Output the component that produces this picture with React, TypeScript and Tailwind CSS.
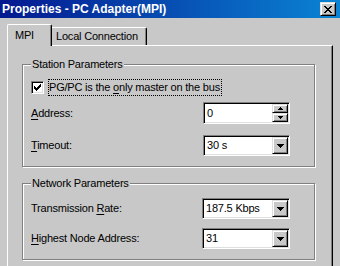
import React from "react";

const raised =
  "bg-[#c8c8c8] border border-t-[#dfdfdf] border-l-[#dfdfdf] border-r-black border-b-black shadow-[inset_1px_1px_0_#fff,inset_-1px_-1px_0_#808080]";
const sunken =
  "bg-white border border-t-[#808080] border-l-[#808080] border-r-white border-b-white shadow-[inset_1px_1px_0_#000,inset_-1px_-1px_0_#dfdfdf]";

function Rects({ w, h, rows }: { w: number; h: number; rows: [number, number, number][] }) {
  return (
    <svg width={w} height={h} viewBox={`0 0 ${w} ${h}`} shapeRendering="crispEdges">
      {rows.map(([x, y, ww], i) => (
        <rect key={i} x={x} y={y} width={ww} height={1} fill="#000" />
      ))}
    </svg>
  );
}

const DownTri = () => (
  <Rects w={7} h={4} rows={[[0, 0, 7], [1, 1, 5], [2, 2, 3], [3, 3, 1]]} />
);

function Combo({ value, w }: { value: string; w: string }) {
  return (
    <div className={`${sunken} ${w} h-[21px] flex items-stretch p-[1px]`}>
      <div className="flex-1 flex items-center pl-[2px]">{value}</div>
      <div className={`${raised} w-[16px] flex items-center justify-center`}>
        <DownTri />
      </div>
    </div>
  );
}

function Spin({ value, w }: { value: string; w: string }) {
  return (
    <div className={`${sunken} ${w} h-[22px] flex items-stretch p-[1px]`}>
      <div className="flex-1 flex items-center pl-[2px]">{value}</div>
      <div className="w-[16px] flex flex-col">
        <div className={`${raised} flex-1 flex items-center justify-center`}>
          <Rects w={5} h={3} rows={[[2, 0, 1], [1, 1, 3], [0, 2, 5]]} />
        </div>
        <div className={`${raised} flex-1 flex items-center justify-center`}>
          <Rects w={5} h={3} rows={[[0, 0, 5], [1, 1, 3], [2, 2, 1]]} />
        </div>
      </div>
    </div>
  );
}

function U({ children }: { children: React.ReactNode }) {
  return <span className="underline underline-offset-[2px] decoration-1">{children}</span>;
}

export default function App() {
  return (
    <div className="w-[340px] h-[266px] overflow-hidden bg-[#c8c8c8] flex flex-col font-['Liberation_Sans',Arial,sans-serif] text-[11px] leading-[13px] tracking-[-0.2px] text-black">
      {/* Title bar */}
      <div className="h-[18px] shrink-0 flex items-center justify-between pl-[2px] pr-[4px] bg-[linear-gradient(to_right,#041890,#0a84d4)]">
        <span className="text-white font-bold text-[12px] tracking-normal leading-[14px]">
          Properties - PC Adapter(MPI)
        </span>
        <div className={`${raised} w-[16px] h-[14px] flex items-center justify-center`}>
          <Rects
            w={8}
            h={7}
            rows={[
              [0, 0, 2], [6, 0, 2],
              [1, 1, 2], [5, 1, 2],
              [2, 2, 4],
              [3, 3, 2],
              [2, 4, 4],
              [1, 5, 2], [5, 5, 2],
              [0, 6, 2], [6, 6, 2],
            ]}
          />
        </div>
      </div>

      {/* Body */}
      <div className="flex flex-col pl-[7px] pt-[6px]">
        {/* Tabs */}
        <div className="flex items-end h-[21px]">
          <div className="relative z-10 -mb-[1px] h-[22px] w-[45px] bg-[#c8c8c8] border-l border-t border-white border-r border-r-black rounded-t-[2px] shadow-[inset_-1px_0_0_#808080] flex items-center pl-[7px]">
            MPI
          </div>
          <div className="h-[18px] w-[95px] border-t border-white border-r border-r-black rounded-tr-[2px] shadow-[inset_-1px_0_0_#808080] flex items-center pl-[4px]">
            Local Connection
          </div>
        </div>

        {/* Panel */}
        <div className="w-[326px] h-[230px] border-l border-t border-white border-r border-r-black shadow-[inset_-1px_0_0_#808080] pt-[18px] pl-[14px] flex flex-col">
          {/* Station Parameters */}
          <div className="relative w-[293px] border border-[#808080] shadow-[inset_1px_1px_0_#fff,1px_1px_0_#fff] pl-[8px] pr-[24px] pt-[14px] pb-[10px] flex flex-col">
            <span className="absolute left-[8px] top-[-7px] bg-[#c8c8c8] px-[1px]">Station Parameters</span>
            <div className="flex items-center h-[17px]">
              <div className={`${sunken} w-[13px] h-[13px] flex items-center justify-center`}>
                <Rects
                  w={7}
                  h={7}
                  rows={[
                    [6, 0, 1],
                    [5, 1, 2],
                    [0, 2, 1], [4, 2, 3],
                    [0, 3, 2], [3, 3, 3],
                    [0, 4, 5],
                    [1, 5, 3],
                    [2, 6, 1],
                  ]}
                />
              </div>
              <div className="ml-[4px] h-[17px] border border-dotted border-black flex items-center pr-[1px]">
                <span>
                  PG/PC is the <U>o</U>nly master on the bus
                </span>
              </div>
            </div>
            <div className="mt-[6px] flex items-center justify-between">
              <span>
                <U>A</U>ddress:
              </span>
              <Spin value="0" w="w-[87px]" />
            </div>
            <div className="mt-[11px] flex items-center justify-between">
              <span>
                <U>T</U>imeout:
              </span>
              <Combo value="30 s" w="w-[87px]" />
            </div>
          </div>

          {/* Network Parameters */}
          <div className="relative mt-[16px] w-[293px] border border-[#808080] shadow-[inset_1px_1px_0_#fff,1px_1px_0_#fff] pl-[8px] pr-[24px] pt-[14px] pb-[10px] flex flex-col">
            <span className="absolute left-[8px] top-[-7px] bg-[#c8c8c8] px-[1px]">Network Parameters</span>
            <div className="flex items-center justify-between">
              <span>
                Transmission <U>R</U>ate:
              </span>
              <Combo value="187.5 Kbps" w="w-[88px]" />
            </div>
            <div className="mt-[9px] flex items-center justify-between">
              <span>
                <U>H</U>ighest Node Address:
              </span>
              <Combo value="31" w="w-[88px]" />
            </div>
          </div>
        </div>
      </div>
    </div>
  );
}
